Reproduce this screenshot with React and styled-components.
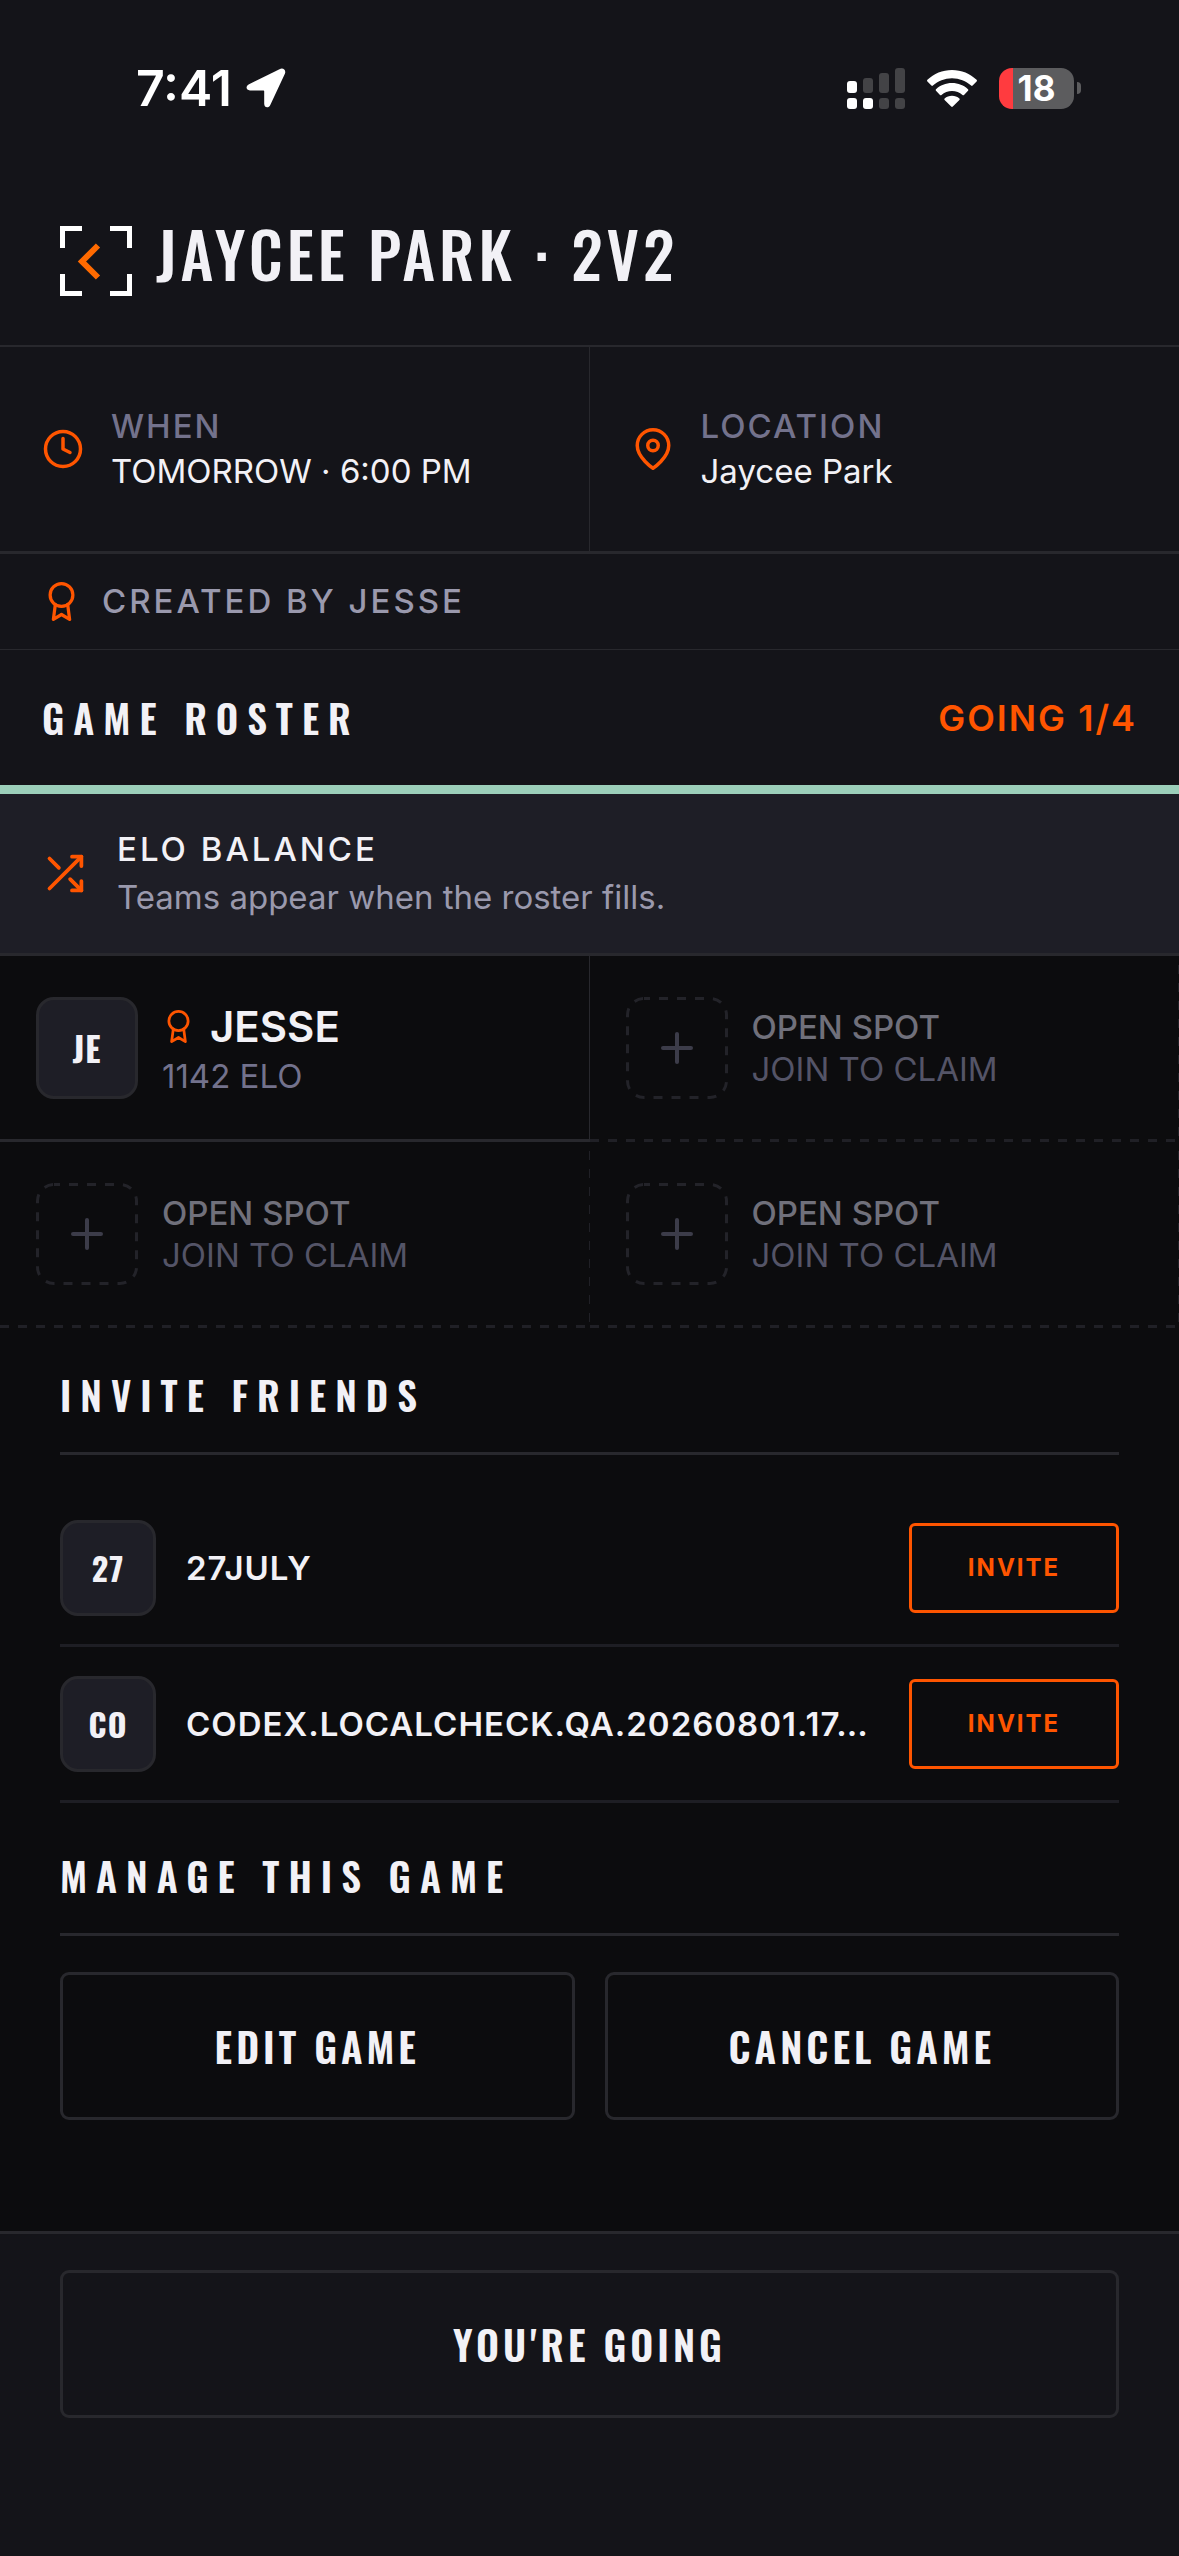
import React from 'react'
import styled, { createGlobalStyle, ThemeProvider } from 'styled-components'
import { FiAward, FiClock, FiMapPin, FiShuffle } from 'react-icons/fi'

const theme = {
    page: '#0c0c0e',
    surface: '#141419',
    raised: '#1e1e26',
    line: '#28282d',
    softLine: '#1e1e24',
    text: '#f2f1f6',
    dim: '#9a99ad',
    muted: '#73728c',
    accent: '#ff5500',
    mint: '#9ccfba',
    body: 'Inter, "Liberation Sans", sans-serif',
    display: 'Oswald, "Roboto Condensed", Roboto, sans-serif'
}

const GlobalStyle = createGlobalStyle`
    * {
        box-sizing: border-box;
    }
    body {
        margin: 0;
        background: ${theme.page};
        color: ${theme.text};
        font-family: ${theme.body};
        font-size: 33px;
        line-height: 42px;
    }
    h1, h2, p, ul {
        margin: 0;
        padding: 0;
    }
    svg {
        display: block;
        flex: none;
    }
`
const Page = styled.div`
    min-height: 100vh;
    display: flex;
    flex-direction: column;
`
// ******************** status bar ********************
const StatusBar = styled.div`
    display: flex;
    align-items: center;
    justify-content: space-between;
    padding: 64px 98px 64px 136px;
    background: ${({ theme }) => theme.surface};
    color: #fff;
`
const StatusGroup = styled.div`
    display: flex;
    align-items: center;
    gap: ${({ $gap }) => $gap};
`
const Time = styled.span`
    font-size: 50px;
    font-weight: 600;
    line-height: 48px;
`
const Battery = styled.div`
    display: flex;
    align-items: center;
    gap: 3px;
`
const BatteryBody = styled.div`
    width: 75px;
    border-radius: 13px;
    background: linear-gradient(90deg, #ff3b3f 14px, #5c5c5e 14px);
    font-size: 35px;
    font-weight: 700;
    line-height: 41px;
    text-align: center;
`
const BatteryCap = styled.div`
    width: 4px;
    height: 12px;
    border-radius: 0 4px 4px 0;
    background: #5c5c5e;
`
// ******************** header ********************
const Header = styled.header`
    display: flex;
    align-items: flex-start;
    gap: 24px;
    padding: 50px 60px 49px;
    background: ${({ theme }) => theme.surface};
    border-bottom: 2px solid ${({ theme }) => theme.line};
`
const BackButton = styled.button`
    padding: 0;
    border: 0;
    background: none;
`
const Title = styled.h1`
    font-family: ${({ theme }) => theme.display};
    font-size: 63px;
    font-weight: 500;
    line-height: 54px;
    letter-spacing: 4px;
`
const InfoGrid = styled.section`
    display: grid;
    grid-template-columns: 1fr 1fr;
    background: ${({ theme }) => theme.surface};
    border-bottom: 3px solid ${({ theme }) => theme.line};
`
const InfoCell = styled.div`
    display: flex;
    align-items: center;
    gap: 27px;
    padding: 57px 42px;
    line-height: 45px;

    &:first-child {
        border-right: 1px solid ${({ theme }) => theme.line};
    }
    svg {
        color: ${({ theme }) => theme.accent};
    }
`
const InfoLabel = styled.p`
    color: ${({ theme }) => theme.muted};
    font-weight: 500;
    letter-spacing: 2px;
`
const InfoValue = styled.p`
    color: ${({ theme }) => theme.text};
`
const CreatedBy = styled.div`
    display: flex;
    align-items: center;
    gap: 21px;
    padding: 26px 42px 27px;
    background: ${({ theme }) => theme.surface};
    border-bottom: 1px solid ${({ theme }) => theme.line};
    color: ${({ theme }) => theme.dim};
    font-weight: 500;
    letter-spacing: 3px;

    svg {
        color: ${({ theme }) => theme.accent};
    }
`
// ******************** roster ********************
const RosterHeader = styled.div`
    display: flex;
    align-items: center;
    justify-content: space-between;
    padding: 45px 42px;
    background: ${({ theme }) => theme.surface};
    border-bottom: 9px solid ${({ theme }) => theme.mint};
`
const SectionTitle = styled.h2`
    font-family: ${({ theme }) => theme.display};
    font-size: 39px;
    font-weight: 600;
    line-height: 45px;
    letter-spacing: 9px;
`
const Going = styled.span`
    color: ${({ theme }) => theme.accent};
    font-size: 36px;
    font-weight: 600;
    letter-spacing: 2px;
`
const EloBanner = styled.div`
    display: flex;
    align-items: center;
    gap: 30px;
    padding: 31px 42px 32px;
    background: ${({ theme }) => theme.raised};
    border-bottom: 3px solid ${({ theme }) => theme.line};
    line-height: 48px;

    svg {
        color: ${({ theme }) => theme.accent};
    }
`
const EloTitle = styled.p`
    font-weight: 500;
    letter-spacing: 3px;
`
const EloText = styled.p`
    color: ${({ theme }) => theme.dim};
`
const RosterGrid = styled.ul`
    display: grid;
    grid-template-columns: 1fr 1fr;
    list-style: none;
`
const Spot = styled.li`
    display: flex;
    align-items: center;
    gap: 24px;
    min-height: 186px;
    padding: 0 36px;
    border: solid ${({ theme }) => theme.line};
    border-width: 0 1px 3px 0;
`
// dashes are painted as backgrounds so that they keep an even 9px rhythm
const EmptySpot = styled(Spot)`
    border-color: transparent;
    background:
        repeating-linear-gradient(90deg, #202026 0 9px, transparent 9px 18px) left bottom / 100% 3px no-repeat border-box,
        repeating-linear-gradient(180deg, transparent 0 9px, #202026 9px 18px) right top / 1px 100% no-repeat border-box;
`
const Avatar = styled.div`
    display: flex;
    align-items: center;
    justify-content: center;
    flex: none;
    width: ${({ $large }) => ($large ? '102px' : '96px')};
    height: ${({ $large }) => ($large ? '102px' : '96px')};
    border: 3px solid ${({ theme }) => theme.line};
    border-radius: 18px;
    background: ${({ theme }) => theme.raised};
    font-family: ${({ theme }) => theme.display};
    font-size: ${({ $large }) => ($large ? '34px' : '32px')};
    font-weight: 700;
    letter-spacing: 1px;
`
const PlayerName = styled.p`
    display: flex;
    align-items: center;
    gap: 15px;
    font-size: 42px;
    font-weight: 600;
    line-height: 57px;

    svg {
        color: ${({ theme }) => theme.accent};
    }
`
const PlayerElo = styled.p`
    color: ${({ theme }) => theme.muted};
`
const OpenTitle = styled.p`
    color: #70707b;
    font-weight: 500;
`
const OpenHint = styled.p`
    color: #545467;
`
// ******************** invite and manage ********************
const Section = styled.section`
    padding: 44px 60px 0;
`
const SectionHeading = styled(SectionTitle)`
    padding-bottom: 35px;
    border-bottom: 3px solid ${({ theme }) => theme.line};
`
const FriendList = styled.ul`
    padding: 36px 0 6px;
    list-style: none;
`
const FriendRow = styled.li`
    display: flex;
    align-items: center;
    gap: 30px;
    min-height: 156px;
    border-bottom: 3px solid ${({ theme }) => theme.softLine};
`
const FriendName = styled.span`
    flex: 1;
    min-width: 0;
    white-space: nowrap;
    font-weight: 600;
    letter-spacing: 1px;
`
const InviteButton = styled.button`
    flex: none;
    width: 210px;
    height: 90px;
    border: 3px solid ${({ theme }) => theme.accent};
    border-radius: 6px;
    background: none;
    color: ${({ theme }) => theme.accent};
    font-family: ${({ theme }) => theme.body};
    font-size: 24px;
    font-weight: 700;
    letter-spacing: 2px;
`
const Actions = styled.div`
    display: flex;
    gap: 30px;
    padding: 36px 0 111px;
`
const ActionButton = styled.button`
    flex: 1;
    padding: 47px 24px;
    border: 3px solid ${({ theme }) => theme.line};
    border-radius: 9px;
    background: none;
    color: ${({ theme }) => theme.text};
    font-family: ${({ theme }) => theme.display};
    font-size: 40px;
    font-weight: 600;
    line-height: 48px;
    letter-spacing: 4px;
`
const Footer = styled.footer`
    display: flex;
    flex: 1;
    align-items: flex-start;
    padding: 36px 60px 138px;
    background: ${({ theme }) => theme.surface};
    border-top: 3px solid ${({ theme }) => theme.line};
`
// ***************************************************
const LocationArrow = () => (
    <svg width="40" height="40" viewBox="0 0 40 40" fill="#fff">
        <path d="M33.500 1.200 3 16.200C-.6 18-.2 22.400 4 22.400h13.200c.7 0 1 .3 1 1v12.400c0 4.300 4.600 4.800 6.200 1L39 5.600C40.200 2 37-.6 33.500 1.200z" />
    </svg>
)

const SignalIcon = () => (
    <svg width="58" height="41" viewBox="0 0 58 41" fill="#fff">
        <rect x="0" y="13" width="10" height="12" rx="3" />
        <rect x="0" y="30" width="10" height="11" rx="3" />
        <rect x="16" y="30" width="10" height="11" rx="3" />
        <g fill="#434346">
            <rect x="16" y="10" width="10" height="15" rx="3" />
            <rect x="32" y="5" width="10" height="20" rx="3" />
            <rect x="48" y="0" width="10" height="25" rx="3" />
            <rect x="32" y="30" width="10" height="11" rx="3" />
            <rect x="48" y="30" width="10" height="11" rx="3" />
        </g>
    </svg>
)

const WifiIcon = () => (
    <svg width="50" height="37" viewBox="0 0 50 37" fill="#fff">
        <path d="M25 0C15.500 0 6.800 3.700.4 9.800c-.5.500-.5 1.100 0 1.600l4 4.200c.5.500 1 .5 1.500 0C11 11 17.600 8.200 25 8.200S39 11 44.100 15.600c.5.500 1 .5 1.500 0l4-4.200c.5-.5.5-1.100 0-1.600C43.200 3.700 34.500 0 25 0z" />
        <path d="M25 13c-6.200 0-11.900 2.300-16 6.200-.5.500-.5 1.100 0 1.600l4 4.100c.5.500 1 .500 1.500.1 2.800-2.400 6.500-3.900 10.500-3.900s7.700 1.500 10.500 3.900c.5.400 1 .4 1.500-.1l4-4.100c.5-.5.5-1.100 0-1.600-4.100-3.900-9.800-6.200-16-6.200z" />
        <path d="M25 25.700c-2.800 0-5.400 1-7.400 2.700-.5.500-.5 1 0 1.500l6.600 6.600c.5.500 1.100.5 1.600 0l6.600-6.600c.5-.5.5-1 0-1.500-2-1.700-4.600-2.700-7.400-2.700z" />
    </svg>
)

const BackIcon = () => (
    <svg width="72" height="70" viewBox="0 0 72 70" fill="none" strokeWidth="5">
        <path d="M2.500 22V2.500H22M50 2.500h19.500V22M69.500 48v19.500H50M22 67.500H2.500V48" stroke="#fff" />
        <path d="M38 19.500 22 35.500l16 16" stroke="#ff6a00" strokeWidth="6" />
    </svg>
)

const EmptySlotIcon = () => (
    <svg width="102" height="102" viewBox="0 0 102 102" fill="none">
        <rect x="1.500" y="1.500" width="99" height="99" rx="16.500" stroke="#232329" strokeWidth="3" strokeDasharray="9 9" strokeDashoffset="3" />
        <path d="M51 37v28M37 51h28" stroke="#3c3c49" strokeWidth="4" strokeLinecap="round" />
    </svg>
)

const OpenSpot = () => (
    <EmptySpot>
        <EmptySlotIcon />
        <div>
            <OpenTitle>OPEN SPOT</OpenTitle>
            <OpenHint>JOIN TO CLAIM</OpenHint>
        </div>
    </EmptySpot>
)

const friends = [
    { initials: '27', name: '27JULY' },
    { initials: 'CO', name: 'CODEX.LOCALCHECK.QA.20260801.17…' }
]

const App = () => {
    return (
        <ThemeProvider theme={theme}>
            <GlobalStyle />
            <Page>
                <StatusBar>
                    <StatusGroup $gap="14px">
                        <Time>7:41</Time>
                        <LocationArrow />
                    </StatusGroup>
                    <StatusGroup $gap="22px">
                        <SignalIcon />
                        <WifiIcon />
                        <Battery>
                            <BatteryBody>18</BatteryBody>
                            <BatteryCap />
                        </Battery>
                    </StatusGroup>
                </StatusBar>

                <Header>
                    <BackButton aria-label="Back"><BackIcon /></BackButton>
                    <Title>JAYCEE PARK · 2V2</Title>
                </Header>

                <InfoGrid>
                    <InfoCell>
                        <FiClock size={42} />
                        <div>
                            <InfoLabel>WHEN</InfoLabel>
                            <InfoValue>TOMORROW · 6:00 PM</InfoValue>
                        </div>
                    </InfoCell>
                    <InfoCell>
                        <FiMapPin size={42} />
                        <div>
                            <InfoLabel>LOCATION</InfoLabel>
                            <InfoValue>Jaycee Park</InfoValue>
                        </div>
                    </InfoCell>
                </InfoGrid>
                <CreatedBy>
                    <FiAward size={39} />
                    <span>CREATED BY JESSE</span>
                </CreatedBy>

                <RosterHeader>
                    <SectionTitle>GAME ROSTER</SectionTitle>
                    <Going>GOING 1/4</Going>
                </RosterHeader>
                <EloBanner>
                    <FiShuffle size={45} />
                    <div>
                        <EloTitle>ELO BALANCE</EloTitle>
                        <EloText>Teams appear when the roster fills.</EloText>
                    </div>
                </EloBanner>
                <RosterGrid>
                    <Spot>
                        <Avatar $large>JE</Avatar>
                        <div>
                            <PlayerName><FiAward size={33} />JESSE</PlayerName>
                            <PlayerElo>1142 ELO</PlayerElo>
                        </div>
                    </Spot>
                    <OpenSpot />
                    <OpenSpot />
                    <OpenSpot />
                </RosterGrid>

                <Section>
                    <SectionHeading>INVITE FRIENDS</SectionHeading>
                    <FriendList>
                        {friends.map(friend => (
                            <FriendRow key={friend.name}>
                                <Avatar>{friend.initials}</Avatar>
                                <FriendName>{friend.name}</FriendName>
                                <InviteButton>INVITE</InviteButton>
                            </FriendRow>
                        ))}
                    </FriendList>
                </Section>

                <Section>
                    <SectionHeading>MANAGE THIS GAME</SectionHeading>
                    <Actions>
                        <ActionButton>EDIT GAME</ActionButton>
                        <ActionButton>CANCEL GAME</ActionButton>
                    </Actions>
                </Section>

                <Footer>
                    <ActionButton>YOU'RE GOING</ActionButton>
                </Footer>
            </Page>
        </ThemeProvider>
    )
}

export default App
